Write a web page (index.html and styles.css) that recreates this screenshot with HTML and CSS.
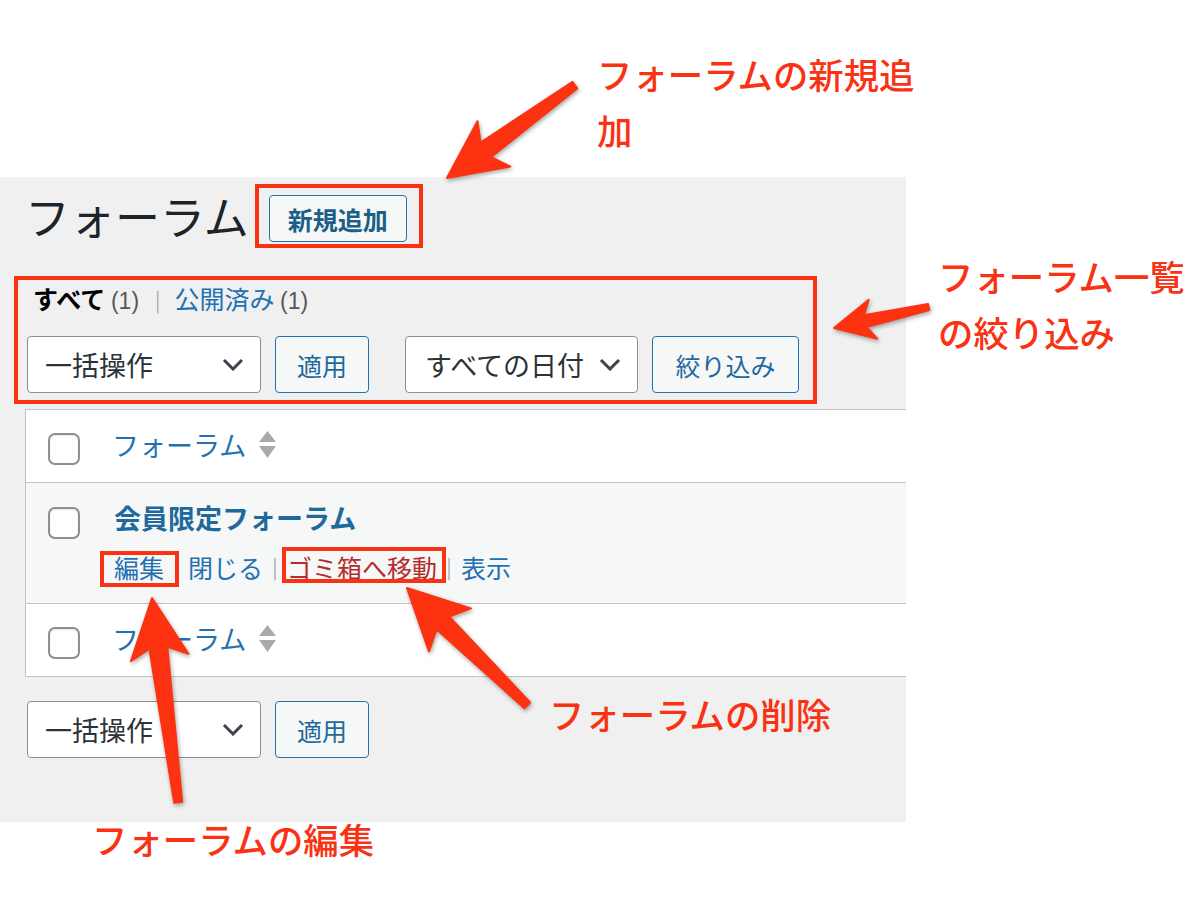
FILE: index.html
```html
<!DOCTYPE html>
<html lang="ja">

<head>
    <meta charset="utf-8">
    <meta name="viewport" content="width=device-width, initial-scale=1.0">
    <title>フォーラム</title>
    <link rel="stylesheet" href="styles.css">
</head>

<body>
    <div class="screen">
        <div class="title-row">
            <h1>フォーラム</h1>
            <div class="mark add-mark">
                <a class="btn add" href="#">新規追加</a>
            </div>
        </div>

        <div class="mark filter-mark">
            <ul class="subsubsub">
                <li class="current">すべて <span class="count">(1)</span></li>
                <li class="sep">|</li>
                <li><a href="#">公開済み</a> <span class="count">(1)</span></li>
            </ul>
            <div class="tablenav">
                <div class="select bulk">一括操作
                    <svg class="chev" width="22" height="13" viewBox="0 0 22 13"><polyline points="2,2 11,11 20,2" /></svg>
                </div>
                <button class="btn apply">適用</button>
                <div class="select date">すべての日付
                    <svg class="chev" width="22" height="13" viewBox="0 0 22 13"><polyline points="2,2 11,11 20,2" /></svg>
                </div>
                <button class="btn apply filter">絞り込み</button>
            </div>
        </div>

        <div class="list">
            <div class="row head">
                <span class="check"></span>
                <div class="col">
                    <a class="col-name" href="#">フォーラム
                        <svg class="sort" width="17" height="28" viewBox="0 0 17 28"><polygon points="8.5,0 17,11 0,11" /><polygon points="0,15 17,15 8.5,27" /></svg>
                    </a>
                </div>
            </div>
            <div class="row item">
                <span class="check"></span>
                <div class="col">
                    <a class="row-title" href="#">会員限定フォーラム</a>
                    <div class="row-actions">
                        <a class="edit" href="#">編集</a><span class="sep">|</span><a href="#">閉じる</a><span class="sep">|</span><a class="trash" href="#">ゴミ箱へ移動</a><span class="sep">|</span><a href="#">表示</a>
                    </div>
                </div>
            </div>
            <div class="row head">
                <span class="check"></span>
                <div class="col">
                    <a class="col-name" href="#">フォーラム
                        <svg class="sort" width="17" height="28" viewBox="0 0 17 28"><polygon points="8.5,0 17,11 0,11" /><polygon points="0,15 17,15 8.5,27" /></svg>
                    </a>
                </div>
            </div>
        </div>

        <div class="tablenav bottom">
            <div class="select bulk">一括操作
                <svg class="chev" width="22" height="13" viewBox="0 0 22 13"><polyline points="2,2 11,11 20,2" /></svg>
            </div>
            <button class="btn apply">適用</button>
        </div>
    </div>

    <p class="note note-add">フォーラムの新規追加</p>
    <p class="note note-filter">フォーラム一覧の絞り込み</p>
    <p class="note note-trash">フォーラムの削除</p>
    <p class="note note-edit">フォーラムの編集</p>

    <svg class="arrows" width="1204" height="908" viewBox="0 0 1204 908">
        <polygon transform="translate(447,178) rotate(144)" points="0,0 -58,28 -48,9 -158,4 -158,-4 -48,-9 -58,-28" />
        <polygon transform="translate(834,328) rotate(167.5)" points="0,0 -40,20 -32,6 -97,3 -97,-3 -32,-6 -40,-20" />
        <polygon transform="translate(407,588) rotate(-135.7)" points="0,0 -60,30 -50,9 -168,4 -168,-4 -50,-9 -60,-30" />
        <polygon transform="translate(152,598) rotate(-97.3)" points="0,0 -60,29 -50,9 -206,4 -206,-4 -50,-9 -60,-29" />
    </svg>
</body>

</html>
```

FILE: styles.css
```css
body {
    margin: 0;
    background-color: #fff;
    font-family: "Noto Sans CJK JP", "Noto Sans", sans-serif;
    color: #2c3338;
    width: 1204px;
    height: 908px;
    overflow: hidden;
}

a {
    color: #2271b1;
    text-decoration: none;
}

.screen {
    margin-top: 177px;
    width: 906px;
    height: 645px;
    padding: 7px 0 0 14px;
    box-sizing: border-box;
    background-color: #f0f0f1;
    overflow: hidden;
}

/* red callout frames */
.mark {
    border: 4px solid #fa3214;
    box-sizing: border-box;
}

.title-row {
    display: flex;
    align-items: center;
    height: 64px;
}

h1 {
    margin: 0 6px 0 11px;
    font-size: 45px;
    font-weight: 400;
    line-height: 64px;
    color: #1d2327;
}

.add-mark {
    height: 64px;
    padding: 7px 12px 2px 10px;
}

.btn {
    display: inline-flex;
    align-items: center;
    justify-content: center;
    box-sizing: border-box;
    border: 1px solid #2271b1;
    border-radius: 4px;
    background-color: #f6f7f7;
    color: #1f6a9c;
    font-family: inherit;
    font-size: 25px;
}

.add {
    width: 138px;
    height: 47px;
    font-weight: 700;
    color: #1b5f88;
}

.apply {
    height: 57px;
    padding: 0 21px;
}

.apply.filter {
    width: 147px;
}

.filter-mark {
    margin-top: 28px;
    width: 803px;
    height: 128px;
}

.subsubsub {
    list-style: none;
    margin: 0 0 0 15px;
    padding: 0;
    display: flex;
    align-items: center;
    font-size: 25px;
    line-height: 36px;
}

.subsubsub .current {
    font-weight: 700;
    color: #000;
}

.subsubsub .current .count {
    font-weight: 400;
}

.count {
    color: #50575e;
    font-family: "Liberation Sans", sans-serif;
    font-size: 23px;
}

.subsubsub .sep {
    color: #a7aaad;
    margin: 0 14px 0 16px;
    font-size: 20px;
}

.tablenav {
    display: flex;
    gap: 14px;
    margin: 17px 0 0 9px;
}

.tablenav .date {
    margin-left: 22px;
}

.select {
    display: flex;
    align-items: center;
    justify-content: space-between;
    box-sizing: border-box;
    height: 57px;
    padding: 0 16px 0 17px;
    border: 1px solid #8c8f94;
    border-radius: 4px;
    background-color: #fff;
    font-size: 27px;
    color: #2c3338;
}

.bulk {
    width: 234px;
}

.date {
    width: 233px;
    padding-left: 19px;
}

.chev polyline {
    fill: none;
    stroke: #3c434a;
    stroke-width: 3;
}

.list {
    margin: 5px 0 0 11px;
    width: 920px;
    border: 1px solid #c3c4c7;
    background-color: #fff;
}

.row {
    display: flex;
    align-items: flex-start;
    padding-left: 22px;
}

.row.head {
    height: 72px;
}

.row.item {
    height: 122px;
    box-sizing: border-box;
    background-color: #f6f7f7;
    border-top: 1px solid #c3c4c7;
    border-bottom: 1px solid #c3c4c7;
}

.check {
    flex: none;
    width: 32px;
    height: 32px;
    margin-top: 23px;
    box-sizing: border-box;
    border: 2px solid #8c8f94;
    border-radius: 7px;
    background-color: #fff;
    box-shadow: inset 0 1px 2px rgba(0, 0, 0, 0.1);
}

.item .check {
    margin-top: 24px;
}

.col {
    margin-left: 32px;
}

.col-name {
    display: flex;
    align-items: center;
    gap: 13px;
    margin-top: 17px;
    font-size: 27px;
    line-height: 36px;
}

.sort polygon {
    fill: #a7aaad;
}

.row-title {
    display: block;
    margin: 17px 0 0 2px;
    font-size: 27px;
    font-weight: 700;
    line-height: 36px;
    color: #1f6a9c;
}

.row-actions {
    display: flex;
    margin: 13px 0 0 2px;
    font-size: 25px;
    line-height: 36px;
}

.row-actions a {
    position: relative;
}

.row-actions .sep {
    width: 24px;
    text-align: center;
    color: #a7aaad;
    font-size: 20px;
}

.row-actions .trash {
    color: #b32d2e;
}

.row-actions .edit::after,
.row-actions .trash::after {
    content: "";
    position: absolute;
    border: 4px solid #fa3214;
}

.row-actions .edit::after {
    top: 2px;
    bottom: -2px;
    left: -14px;
    right: -15px;
}

.row-actions .trash::after {
    top: -2px;
    bottom: 2px;
    left: -5px;
    right: -9px;
}

.tablenav.bottom {
    margin: 24px 0 0 13px;
}

/* annotations */
.note {
    position: absolute;
    margin: 0;
    font-size: 35.4px;
    line-height: 56px;
    font-weight: 500;
    color: #fa3214;
}

.note-add {
    left: 597px;
    top: 46px;
    width: 330px;
}

.note-filter {
    left: 938px;
    top: 248px;
    width: 260px;
}

.note-trash {
    left: 549px;
    top: 686px;
}

.note-edit {
    left: 92px;
    top: 811px;
}

.arrows {
    position: absolute;
    left: 0;
    top: 0;
    pointer-events: none;
    filter: drop-shadow(1px 2px 2px rgba(0, 0, 0, 0.35));
}

.arrows polygon {
    fill: #fc3210;
    stroke: #fc3210;
    stroke-width: 2;
    stroke-linejoin: round;
}
```
